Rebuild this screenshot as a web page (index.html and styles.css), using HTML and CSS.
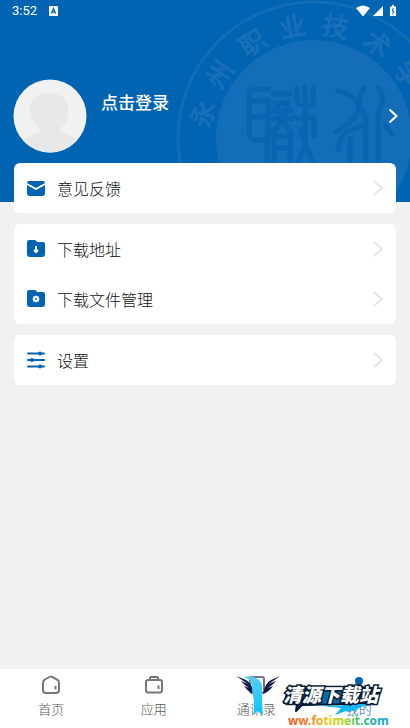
FILE: index.html
```html
<!DOCTYPE html>
<html lang="zh-CN">
<head>
<meta charset="utf-8">
<meta name="viewport" content="width=device-width, initial-scale=1">
<title>我的</title>
<link rel="stylesheet" href="styles.css">
</head>
<body>
<div class="app">
  <header class="hero">
    <svg class="seal" viewBox="0 0 276 276" aria-hidden="true">
      <circle class="seal-ring" cx="138" cy="138" r="136"/>
      <circle class="seal-disc" cx="138" cy="138" r="98"/>
      <g class="seal-text">
        <text x="138" y="34" transform="rotate(-78 138 138)">永</text>
        <text x="138" y="34" transform="rotate(-56 138 138)">州</text>
        <text x="138" y="34" transform="rotate(-33 138 138)">职</text>
        <text x="138" y="34" transform="rotate(-11 138 138)">业</text>
        <text x="138" y="34" transform="rotate(11 138 138)">技</text>
        <text x="138" y="34" transform="rotate(34 138 138)">术</text>
        <text x="138" y="34" transform="rotate(56 138 138)">学</text>
      </g>
      <g class="seal-glyph">
        <path d="M93 89H80Q73 89 73 97V130Q73 140 80 140H88Q92 140 92 132V100M75 101H91M75 117H91M91 140V166"/>
        <path d="M97 94H114M99 103H112M96 111H115M101 105L105 117M112 105L108 117M97 119H115M106 120L96 134M106 120L116 134M98 136H114V166M98 136V166M98 148H114"/>
        <path d="M121 88V102Q121 105 127 105H134Q137 105 137 102V88M129 87V145L121 166M117 118H138M124 130L138 166M138 122V136"/>
        <path d="M162 91Q180 95 183 106Q184 117 160 132M188 88Q178 103 190 117V166M202 88Q211 96 202 112V166M187 125L170 132Q164 137 162 150M174 139V166M209 125L216 134"/>
      </g>
    </svg>
    <div class="status">
      <span>3:52</span>
      <svg class="status-app" viewBox="0 0 10 10" aria-hidden="true"><rect width="9" height="10" rx="1" fill="#fff"/><path d="M2.4 7.5 4.5 2.5 6.6 7.5M3.3 6H5.8" fill="none" stroke="#0064b2" stroke-width="1.3"/></svg>
      <svg class="status-icons" viewBox="0 0 42 12" aria-hidden="true">
        <g fill="#fff"><path d="M0 3Q7-2 14 3L7 11.500Z"/><path d="M27 1V11H17Z"/><path d="M34 1.500H36V0H38V1.500H40V11H34Z"/></g>
        <path d="M37.500 3 36 6H38L36.500 9" fill="none" stroke="#0064b2" stroke-width="1"/>
      </svg>
    </div>
    <a class="profile" href="#login">
      <svg class="avatar" viewBox="0 0 74 74" aria-hidden="true">
        <clipPath id="face"><circle cx="37" cy="37" r="36.500"/></clipPath>
        <circle cx="37" cy="37" r="36.500" fill="#f1f1f1"/>
        <g clip-path="url(#face)" fill="#e8e8e8"><path d="M17 30Q17 15 36 14Q55 15 55 30Q56 43 47 50V53L60 58Q66 60 68 74H6Q8 60 14 58L27 53V50Q17 43 17 30Z"/></g>
      </svg>
      <span class="login">点击登录</span>
      <svg class="go" viewBox="0 0 10 16" aria-hidden="true"><path d="M1.500 1.500 8.500 8 1.500 14.500"/></svg>
    </a>
  </header>

  <main class="menu">
    <nav class="card">
      <a class="row" href="#feedback">
        <svg class="icon" viewBox="0 0 20 20" aria-hidden="true"><path d="M3 3H17Q19 3 19 5L10 10 1 5Q1 3 3 3ZM1 7 10 12 19 7V15Q19 18 16 18H4Q1 18 1 15Z"/></svg>
        <span>意见反馈</span>
        <svg class="chevron" viewBox="0 0 10 16" aria-hidden="true"><path d="M1 1 9 8 1 15"/></svg>
      </a>
    </nav>
    <nav class="card">
      <a class="row" href="#address">
        <svg class="icon" viewBox="0 0 20 20" aria-hidden="true"><path d="M3 1H9Q10 1 11 3H17Q19 3 19 5V15Q19 18 16 18H4Q1 18 1 15V3Q1 1 3 1Z"/><path class="cut" d="M10 7V13M8 11 10 13 12 11"/></svg>
        <span>下载地址</span>
        <svg class="chevron" viewBox="0 0 10 16" aria-hidden="true"><path d="M1 1 9 8 1 15"/></svg>
      </a>
      <a class="row" href="#files">
        <svg class="icon" viewBox="0 0 20 20" aria-hidden="true"><path d="M3 1H9Q10 1 11 3H17Q19 3 19 5V15Q19 18 16 18H4Q1 18 1 15V3Q1 1 3 1Z"/><circle class="cut" cx="10" cy="10" r="2"/><path class="cut thin" d="M10 6.500V8M10 12V13.500M6.500 10H8M12 10H13.500M7.500 7.500 8.500 8.500M11.500 11.500 12.500 12.500M12.500 7.500 11.500 8.500M8.500 11.500 7.500 12.500"/></svg>
        <span>下载文件管理</span>
        <svg class="chevron" viewBox="0 0 10 16" aria-hidden="true"><path d="M1 1 9 8 1 15"/></svg>
      </a>
    </nav>
    <nav class="card">
      <a class="row" href="#settings">
        <svg class="icon" viewBox="0 0 20 20" aria-hidden="true"><path class="line" d="M2 3.500H18M2 10H18M2 16.500H18"/><circle cx="14" cy="3.500" r="2"/><circle cx="6" cy="10" r="2"/><circle cx="14" cy="16.500" r="2"/></svg>
        <span>设置</span>
        <svg class="chevron" viewBox="0 0 10 16" aria-hidden="true"><path d="M1 1 9 8 1 15"/></svg>
      </a>
    </nav>
  </main>

  <footer class="dock">
    <nav class="tabs">
      <a class="tab" href="#home">
        <svg viewBox="0 0 20 20" aria-hidden="true"><path d="M4 4.500 8.500 2Q10 1.200 11.500 2L16 4.500Q18 5.500 18 8V15Q18 18 15 18H5Q2 18 2 15V8Q2 5.500 4 4.500ZM14.500 11V14.500"/></svg>
        <span>首页</span>
      </a>
      <a class="tab" href="#apps">
        <svg viewBox="0 0 20 20" aria-hidden="true"><path d="M4 5H16Q18 5 18 7V15Q18 17.500 16 17.500H4Q2 17.500 2 15V7Q2 5 4 5ZM6 5V3Q6 2 7 2H13Q14 2 14 3V5M14.500 10.500V14"/></svg>
        <span>应用</span>
      </a>
      <a class="tab" href="#contacts">
        <svg viewBox="0 0 20 20" aria-hidden="true"><rect x="4" y="2" width="14" height="16" rx="2"/></svg>
        <span>通讯录</span>
      </a>
      <a class="tab active" href="#me" aria-current="page">
        <svg viewBox="0 0 20 20" aria-hidden="true"><circle cx="10" cy="6" r="4"/><path d="M3 18V15Q4 10 10 10T17 15V18Z"/></svg>
        <span>我的</span>
      </a>
    </nav>
    <svg class="brand" viewBox="0 0 156 56" aria-hidden="true">
      <defs>
        <linearGradient id="rainbow"><stop offset="0" stop-color="#f05a28"/><stop offset=".22" stop-color="#f58220"/><stop offset=".4" stop-color="#e8cf16"/><stop offset=".58" stop-color="#a2d527"/><stop offset=".72" stop-color="#35b779"/><stop offset="1" stop-color="#12a5e8"/></linearGradient>
        <linearGradient id="plate"><stop offset="0" stop-color="#07112b"/><stop offset=".5" stop-color="#0876b4"/><stop offset="1" stop-color="#08182f"/></linearGradient>
        <linearGradient id="blade" x2="0" y2="1"><stop offset="0" stop-color="#58cdf5"/><stop offset="1" stop-color="#08c7fa"/></linearGradient>
      </defs>
      <path fill="#15184c" d="M0 4 10 8Q16 11 18 22Q11 19 8 14L13 16Q7 12 5 9L12 12ZM44 4 35 8Q29 11 27 22Q33 20 37 14L32 16Q38 12 40 9L33 12Z"/>
      <path fill="url(#blade)" d="M8 5Q14 3 20 6Q27 9 26 18L26 28 27 43 21 39 18 43 18 29 16 18Q17 11 12 9L16 9Z"/>
      <path class="plate" fill="url(#plate)" d="M53 15 139 16 135 31 119 32 66 33 60 39 61 32 48 31Z"/>
      <path fill="#11b9f4" d="M77 33Q105 35 118 32L134 32Q124 35 118 39L110 39 99 43 105 36Z"/>
      <text class="brand-name" x="47" y="30">清源下载站</text>
      <text class="brand-url" x="52" y="53" fill="url(#rainbow)">ww.fotimeit.com</text>
    </svg>
  </footer>
</div>
</body>
</html>
```

FILE: styles.css
```css
* { box-sizing: border-box; }

body {
  margin: 0;
  background: #f1f1f1;
  color: #111;
  font-family: "Noto Sans CJK SC", sans-serif;
}

a { color: inherit; text-decoration: none; }
svg { display: block; flex: none; }

.app {
  min-height: 100vh;
  display: flex;
  flex-direction: column;
}

.hero {
  position: relative;
  overflow: hidden;
  padding-bottom: 49px;
  background: #0064b2;
  color: #fff;
}

.seal {
  position: absolute;
  top: 0;
  right: -42px;
  width: 276px;
  height: 276px;
}
.seal-ring { fill: none; stroke: #126cb6; stroke-width: 3; }
.seal-disc { fill: #136db7; }
.seal-text text {
  fill: #1970b8;
  stroke: #1970b8;
  stroke-width: 1;
  font-family: "Noto Sans CJK SC", sans-serif;
  font-size: 26px;
  text-anchor: middle;
}
.seal-glyph path {
  fill: none;
  stroke: #0765b1;
  stroke-width: 5;
  stroke-linecap: round;
  stroke-linejoin: round;
}

.status {
  position: relative;
  display: flex;
  align-items: center;
  height: 22px;
  padding: 0 12px;
  font: 400 13px/22px Roboto, sans-serif;
}
.status-app { width: 10px; height: 10px; margin-left: 12px; }
.status-icons { width: 42px; height: 12px; margin-left: auto; }

.profile {
  position: relative;
  display: flex;
  align-items: center;
  margin-top: 57px;
  padding: 0 12px 0 13px;
}
.avatar { width: 74px; height: 74px; }
.login {
  flex: 1;
  align-self: flex-start;
  margin: 11px 0 0 14px;
  font-size: 17px;
  font-weight: 500;
  line-height: 24px;
}
.go { width: 10px; height: 16px; fill: none; stroke: #fff; stroke-width: 2; }

.menu {
  position: relative;
  flex: 1;
  display: flex;
  flex-direction: column;
  gap: 11px;
  margin-top: -39px;
  padding: 0 14px 24px;
}
.card { border-radius: 6px; background: #fff; }
.row {
  display: flex;
  align-items: center;
  gap: 11px;
  height: 50px;
  padding: 0 13px 0 12px;
  font-size: 16px;
  font-weight: 300;
}
.row span { flex: 1; }
.icon { width: 20px; height: 20px; fill: #0064b2; }
.icon .line { stroke: #0064b2; stroke-width: 2; stroke-linecap: round; }
.icon .cut { fill: none; stroke: #fff; stroke-width: 2; }
.icon .thin { stroke-width: 1; }
.chevron { width: 10px; height: 16px; fill: none; stroke: #e6e6e6; stroke-width: 2; }

.dock { position: relative; background: #fff; }
.tabs { display: grid; grid-template-columns: repeat(4, 1fr); }
.tab {
  display: flex;
  flex-direction: column;
  align-items: center;
  gap: 4px;
  padding: 6px 0 9px;
  color: #555;
  font-size: 13px;
  font-weight: 300;
  line-height: 20px;
}
.tab svg { width: 20px; height: 20px; fill: none; stroke: #777; stroke-width: 2; }
.tab.active { color: #0064b2; }
.tab.active svg { fill: #0064b2; stroke: none; }

.brand {
  position: absolute;
  right: 18px;
  bottom: 0;
  width: 156px;
  height: 56px;
  pointer-events: none;
}
.plate { stroke: #071735; stroke-width: 2; stroke-linejoin: round; }
.brand-name {
  fill: #fff;
  stroke: #081a35;
  stroke-width: 3;
  paint-order: stroke;
  font: italic 900 19px "Noto Sans CJK SC", sans-serif;
}
.brand-url { font: 700 12px "Noto Sans", sans-serif; }
```
